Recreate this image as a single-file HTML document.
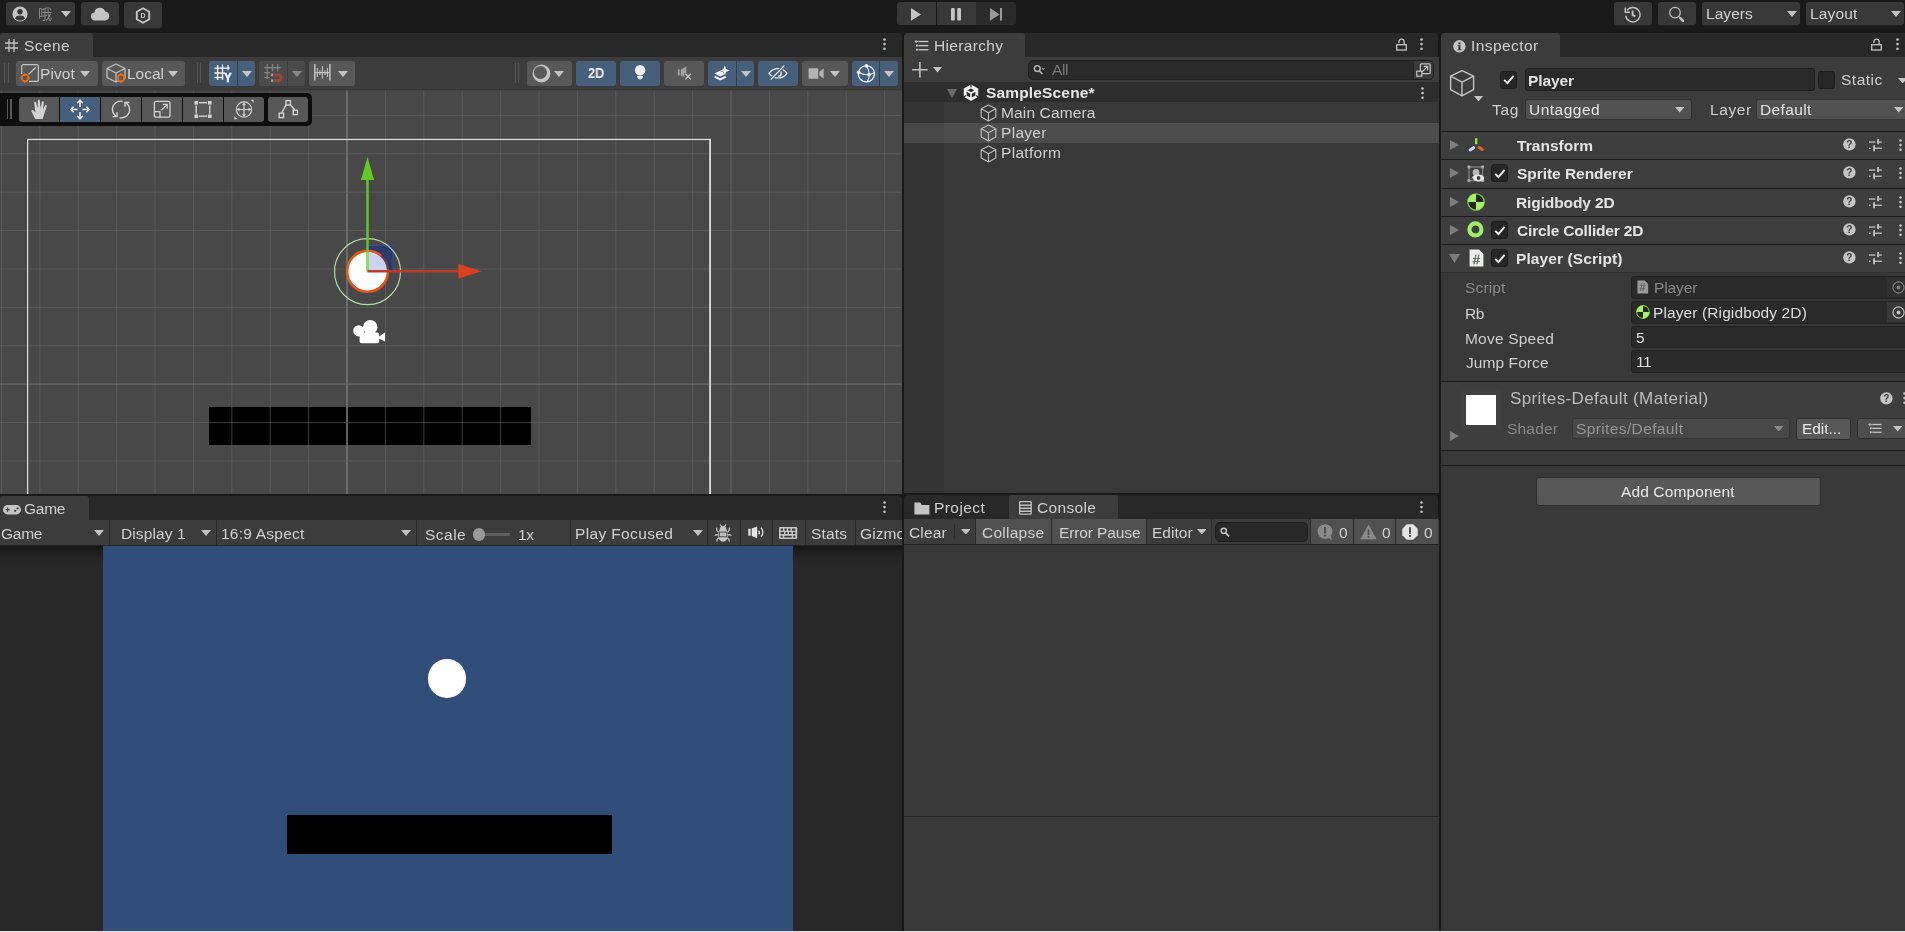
<!DOCTYPE html>
<html><head><meta charset="utf-8"><title>Unity Editor</title>
<style>
html,body{margin:0;padding:0}
body{width:1905px;height:932px;overflow:hidden;background:#191919;position:relative;font-family:"Liberation Sans","Noto Sans CJK SC",sans-serif;font-size:15.5px;color:#d0d0d0}
body div,body span,body svg{position:absolute;box-sizing:border-box}
.t{white-space:nowrap;will-change:transform}
svg.tx{will-change:transform}
.btn{background:#585858;border-radius:3px}
.on{background:#46607c}
.dim{background:#4b4b4b}
</style></head><body>
<div style="left:6px;top:2px;width:69px;height:23px;background:#383838;border-radius:3px;box-shadow:0 1px 0 #222;"></div>
<svg style="left:12px;top:6.4px;" width="16" height="16" viewBox="0 0 16 16"><circle cx="8" cy="8" r="7.6" fill="#c4c4c4"/><circle cx="8" cy="5.8" r="2.7" fill="#383838"/><path d="M3.2 12.4C3.6 10 5.6 9.4 8 9.4s4.4 .6 4.8 3C11.6 13.8 9.9 14.6 8 14.6S4.4 13.8 3.2 12.4Z" fill="#383838"/></svg>
<span class="t" style="left:38px;top:5px;font-size:14px;line-height:18px;color:#8c8c8c">哦</span>
<svg style="left:61.0px;top:10.8px;" width="10" height="6" viewBox="0 0 10 6"><path d="M0 0H10L5.0 6Z" fill="#c4c4c4"/></svg>
<div style="left:81px;top:2px;width:38px;height:23px;background:#383838;border-radius:3px;box-shadow:0 1px 0 #222;"></div>
<svg style="left:90px;top:7px;" width="20" height="14" viewBox="0 0 20 14"><path d="M5 13.5a4 4 0 0 1-.6-7.95A5.6 5.6 0 0 1 15.2 4.4 4.6 4.6 0 0 1 15.4 13.5Z" fill="#c4c4c4"/></svg>
<div style="left:124px;top:2px;width:38px;height:26px;background:#383838;border-radius:3px;box-shadow:0 1px 0 #222;"></div>
<svg class="tx" style="left:135px;top:6.5px;" width="16" height="17" viewBox="0 0 16 17"><path d="M8 1.2L14.2 4.8V12.2L8 15.8L1.8 12.2V4.8Z" fill="none" stroke="#c4c4c4" stroke-width="1.9" stroke-linejoin="round"/><text x="8" y="11" font-size="7" font-weight="bold" text-anchor="middle" fill="#c4c4c4" font-family="Liberation Sans, sans-serif">D</text></svg>
<div style="left:897px;top:2px;width:39px;height:23px;background:#383838;border-radius:3px 0 0 3px;"></div>
<div style="left:937px;top:2px;width:39px;height:23px;background:#383838;"></div>
<div style="left:976px;top:2px;width:39.5px;height:23px;background:#2a2a2a;border-radius:0 3px 3px 0;"></div>
<svg style="left:911px;top:8px;" width="10" height="13" viewBox="0 0 10 13"><path d="M0 0L10 6.4L0 12.8Z" fill="#c4c4c4"/></svg>
<svg style="left:951px;top:8px;" width="10" height="13" viewBox="0 0 10 13"><rect x="0" y="0" width="3.8" height="12.6" rx="1" fill="#c4c4c4"/><rect x="6.2" y="0" width="3.8" height="12.6" rx="1" fill="#c4c4c4"/></svg>
<svg style="left:990px;top:8px;" width="12" height="13" viewBox="0 0 12 13"><path d="M0 0L9.6 6.4L0 12.8Z" fill="#9a9a9a"/><rect x="10" y="0" width="2" height="12.6" fill="#9a9a9a"/></svg>
<div style="left:1614px;top:2px;width:38px;height:23px;background:#383838;border-radius:3px;box-shadow:0 1px 0 #222;"></div>
<svg style="left:1624px;top:6px;" width="18" height="17" viewBox="0 0 18 17"><path d="M3.1 4.4A7.2 7.2 0 1 1 1.7 9.6" fill="none" stroke="#c4c4c4" stroke-width="1.4"/><path d="M1.3 1.6V6.2H5.9" fill="none" stroke="#c4c4c4" stroke-width="1.4"/><path d="M8.6 4.6V9.2L11.4 10.4" fill="none" stroke="#c4c4c4" stroke-width="1.9"/></svg>
<div style="left:1658px;top:2px;width:38px;height:23px;background:#383838;border-radius:3px;box-shadow:0 1px 0 #222;"></div>
<svg style="left:1668px;top:6px;" width="18" height="17" viewBox="0 0 18 17"><circle cx="7" cy="6.6" r="5.3" fill="none" stroke="#c4c4c4" stroke-width="1.2"/><path d="M10.9 10.6L12.9 12.8" stroke="#c4c4c4" stroke-width="1.2"/><path d="M12.4 12.2L15 14.9" stroke="#c4c4c4" stroke-width="2.4" stroke-linecap="round"/></svg>
<div style="left:1702px;top:2px;width:98px;height:23px;background:#383838;border-radius:3px;box-shadow:0 1px 0 #222;"></div>
<span class="t" style="left:1706.00px;top:5.00px;line-height:17px;font-size:15.5px;letter-spacing:0.05px;">Layers</span>
<svg style="left:1786.5px;top:11.2px;" width="10" height="6" viewBox="0 0 10 6"><path d="M0 0H10L5.0 6Z" fill="#c4c4c4"/></svg>
<div style="left:1806px;top:2px;width:98px;height:23px;background:#383838;border-radius:3px;box-shadow:0 1px 0 #222;"></div>
<span class="t" style="left:1810.00px;top:5.00px;line-height:17px;font-size:15.5px;letter-spacing:0.14px;">Layout</span>
<svg style="left:1890.5px;top:11.2px;" width="10" height="6" viewBox="0 0 10 6"><path d="M0 0H10L5.0 6Z" fill="#c4c4c4"/></svg>
<div style="left:0px;top:33px;width:902px;height:24px;background:#282828;border-radius:0 4px 0 0;"></div>
<div style="left:0px;top:33px;width:93px;height:24px;background:#3c3c3c;border-radius:3px 3px 0 0;"></div>
<svg style="left:5px;top:39px;" width="13" height="13" viewBox="0 0 13 13"><path d="M4 0V13M9 0V13M0 4H13M0 9H13" stroke="#c4c4c4" stroke-width="1.3" fill="none"/></svg>
<span class="t" style="left:24.00px;top:37.00px;line-height:17px;font-size:15.5px;letter-spacing:0.41px;">Scene</span>
<svg style="left:883.2px;top:38px;" width="3" height="13" viewBox="0 0 3 13"><circle cx="1.5" cy="1.5" r="1.3" fill="#c4c4c4"/><circle cx="1.5" cy="6.1" r="1.3" fill="#c4c4c4"/><circle cx="1.5" cy="10.7" r="1.3" fill="#c4c4c4"/></svg>
<div style="left:0px;top:57px;width:902px;height:32px;background:#3c3c3c;"></div>
<svg style="left:0;top:89px" width="902" height="405" viewBox="0 0 902 405">
<defs><linearGradient id="sh" x1="0" y1="0" x2="0" y2="1"><stop offset="0" stop-color="#2e2e2e"/><stop offset="1" stop-color="#484848" stop-opacity="0"/></linearGradient></defs>
<rect width="902" height="405" fill="#484848"/>
<rect x="209" y="318" width="322" height="38" fill="#000"/>
<rect x="0.90" y="0" width="1" height="405" fill="#676767" fill-opacity="0.58"/><rect x="39.30" y="0" width="1" height="405" fill="#676767" fill-opacity="0.58"/><rect x="77.70" y="0" width="1" height="405" fill="#676767" fill-opacity="0.58"/><rect x="116.10" y="0" width="1" height="405" fill="#676767" fill-opacity="0.58"/><rect x="154.50" y="0" width="1" height="405" fill="#676767" fill-opacity="0.58"/><rect x="192.90" y="0" width="1" height="405" fill="#676767" fill-opacity="0.58"/><rect x="231.30" y="0" width="1" height="405" fill="#676767" fill-opacity="0.58"/><rect x="269.70" y="0" width="1" height="405" fill="#676767" fill-opacity="0.58"/><rect x="308.10" y="0" width="1" height="405" fill="#676767" fill-opacity="0.58"/><rect x="346.00" y="0" width="2" height="405" fill="#727272" fill-opacity="0.83"/><rect x="384.90" y="0" width="1" height="405" fill="#676767" fill-opacity="0.58"/><rect x="423.30" y="0" width="1" height="405" fill="#676767" fill-opacity="0.58"/><rect x="461.70" y="0" width="1" height="405" fill="#676767" fill-opacity="0.58"/><rect x="500.10" y="0" width="1" height="405" fill="#676767" fill-opacity="0.58"/><rect x="538.50" y="0" width="1" height="405" fill="#676767" fill-opacity="0.58"/><rect x="576.90" y="0" width="1" height="405" fill="#676767" fill-opacity="0.58"/><rect x="615.30" y="0" width="1" height="405" fill="#676767" fill-opacity="0.58"/><rect x="653.70" y="0" width="1" height="405" fill="#676767" fill-opacity="0.58"/><rect x="692.10" y="0" width="1" height="405" fill="#676767" fill-opacity="0.58"/><rect x="730.00" y="0" width="2" height="405" fill="#676767" fill-opacity="0.45"/><rect x="768.90" y="0" width="1" height="405" fill="#676767" fill-opacity="0.58"/><rect x="807.30" y="0" width="1" height="405" fill="#676767" fill-opacity="0.58"/><rect x="845.70" y="0" width="1" height="405" fill="#676767" fill-opacity="0.58"/><rect x="884.10" y="0" width="1" height="405" fill="#676767" fill-opacity="0.58"/><rect x="0" y="25.90" width="902" height="1" fill="#676767" fill-opacity="0.58"/><rect x="0" y="64.30" width="902" height="1" fill="#676767" fill-opacity="0.58"/><rect x="0" y="102.70" width="902" height="1" fill="#676767" fill-opacity="0.58"/><rect x="0" y="141.10" width="902" height="1" fill="#676767" fill-opacity="0.58"/><rect x="0" y="179.50" width="902" height="1" fill="#676767" fill-opacity="0.58"/><rect x="0" y="217.90" width="902" height="1" fill="#676767" fill-opacity="0.58"/><rect x="0" y="256.30" width="902" height="1" fill="#676767" fill-opacity="0.58"/><rect x="0" y="294.35" width="902" height="1.7" fill="#727272" fill-opacity="0.6"/><rect x="0" y="333.10" width="902" height="1" fill="#676767" fill-opacity="0.58"/><rect x="0" y="371.50" width="902" height="1" fill="#676767" fill-opacity="0.58"/>
<rect x="27" y="50" width="1.2" height="360" fill="#dcdcdc"/>
<rect x="27" y="49.8" width="684" height="1.3" fill="#dadada"/>
<rect x="709.2" y="50" width="1.8" height="360" fill="#dcdcdc"/>

<rect x="367.5" y="156.5" width="25.6" height="25.6" fill="#2c3a6e" stroke="#3b4c9c" stroke-width="1"/>
<circle cx="367.5" cy="182.70000000000002" r="33" fill="none" stroke="#b6dca6" stroke-width="1.2"/>
<circle cx="367.5" cy="182.3" r="20.4" fill="#fff" stroke="#e2571b" stroke-width="2.6"/>
<path d="M367.5 182.3V163.10000000000002A19.2 19.2 0 0 1 386.7 182.3Z" fill="#cbd4f1"/>
<path d="M381.5 166.3A21 21 0 0 1 388.1 180.3" fill="none" stroke="#2c3a6e" stroke-width="2.4" stroke-opacity="0.75"/>
<path d="M367.5 182.3V90.5" stroke="#63c628" stroke-width="2.5"/>
<path d="M367.5 182.3V163.3" stroke="#8fdd68" stroke-width="2.5"/>
<path d="M367.5 68L374.1 91H360.9Z" fill="#60c924"/>
<path d="M367.5 182.3H458.6" stroke="#bd3b2b" stroke-width="2.5"/>
<path d="M481.5 182.3L458.4 174.9V189.70000000000002Z" fill="#db421d"/>
<g fill="#fff" transform="translate(0,-89)">
<circle cx="358.8" cy="330.8" r="5.6"/><circle cx="370.2" cy="327.2" r="7.2"/>
<rect x="359.6" y="332.4" width="19.6" height="10.8" rx="2"/>
<path d="M378.6 336.8L385 332.6V341.6L378.6 338.6Z"/></g>
<rect width="902" height="3" fill="url(#sh)"/>
</svg>
<div style="left:4.2px;top:63px;width:1.3px;height:20px;background:#555;"></div><div style="left:7.5px;top:63px;width:1.3px;height:20px;background:#555;"></div>
<div class="btn" style="left:16px;top:61px;width:82px;height:25px;border-radius:3px"></div>
<svg style="left:19px;top:62px;" width="24" height="24" viewBox="0 0 24 24"><path d="M2.7 12V4.6a2 2 0 0 1 2-2H17.4a2 2 0 0 1 2 2V17.4a2 2 0 0 1 -2 2H10" fill="none" stroke="#c4c4c4" stroke-width="1.2"/><path d="M9.6 12.4L16.8 5.2" stroke="#c4c4c4" stroke-width="1.3"/><g transform="translate(6.1,16)"><circle r="3.3" fill="none" stroke="#e8701a" stroke-width="1.7"/><g fill="#e8701a"><rect x="-1.1" y="-4.6" width="2.2" height="2"/><rect x="-1.1" y="2.6" width="2.2" height="2"/><rect x="-4.6" y="-1.1" width="2" height="2.2"/><rect x="2.6" y="-1.1" width="2" height="2.2"/></g><rect x="-1.9" y="-1.9" width="3.8" height="3.8" fill="#585858"/></g></svg>
<span class="t" style="left:40.00px;top:65.00px;line-height:17px;font-size:15.5px;letter-spacing:0.08px;">Pivot</span>
<svg style="left:80.3px;top:71.0px;" width="10" height="6" viewBox="0 0 10 6"><path d="M0 0H10L5.0 6Z" fill="#c4c4c4"/></svg>
<div class="btn" style="left:102px;top:61px;width:83px;height:25px;border-radius:3px"></div>
<svg style="left:104px;top:62px;" width="24" height="24" viewBox="0 0 24 24"><path d="M12 2L21 6.5V15.5L12 20L3 15.5V6.5ZM3 6.5L12 11L21 6.5M12 11V20" fill="none" stroke="#c4c4c4" stroke-width="1.2" stroke-linejoin="round"/><g transform="translate(17.1,16)"><circle r="3.3" fill="none" stroke="#e8701a" stroke-width="1.7"/><g fill="#e8701a"><rect x="-1.1" y="-4.6" width="2.2" height="2"/><rect x="-1.1" y="2.6" width="2.2" height="2"/><rect x="-4.6" y="-1.1" width="2" height="2.2"/><rect x="2.6" y="-1.1" width="2" height="2.2"/></g><rect x="-1.9" y="-1.9" width="3.8" height="3.8" fill="#585858"/></g></svg>
<span class="t" style="left:127.00px;top:65.00px;line-height:17px;font-size:15.5px;letter-spacing:-0.01px;">Local</span>
<svg style="left:167.6px;top:71.0px;" width="10" height="6" viewBox="0 0 10 6"><path d="M0 0H10L5.0 6Z" fill="#c4c4c4"/></svg>
<div style="left:196.8px;top:63px;width:1.3px;height:20px;background:#555;"></div><div style="left:200.10000000000002px;top:63px;width:1.3px;height:20px;background:#555;"></div>
<div class="btn on" style="left:209px;top:61px;width:28px;height:25px;border-radius:3px 0 0 3px"></div>
<div class="btn on" style="left:238px;top:61px;width:17px;height:25px;border-radius:0 3px 3px 0"></div>
<svg class="tx" style="left:213px;top:63px;" width="20" height="21" viewBox="0 0 20 21"><path d="M4.6 2V17M9.5 1.4V17M15 2V7.2M1.4 5.2H16.8M1.4 10H11.5M1.4 14.5H10.5" stroke="#f4f4f4" stroke-width="1.3" fill="none"/><text transform="translate(14.9,19) scale(0.8,1)" font-size="13.6" font-weight="bold" text-anchor="middle" fill="#f4f4f4" stroke="#f4f4f4" stroke-width="0.7" font-family="Liberation Sans, sans-serif">Y</text></svg>
<svg style="left:241.5px;top:71.0px;" width="10" height="6" viewBox="0 0 10 6"><path d="M0 0H10L5.0 6Z" fill="#c4c4c4"/></svg>
<div class="btn dim" style="left:259px;top:61px;width:28px;height:25px;border-radius:3px 0 0 3px"></div>
<div class="btn dim" style="left:288px;top:61px;width:17px;height:25px;border-radius:0 3px 3px 0"></div>
<svg style="left:262px;top:63px;" width="22" height="21" viewBox="0 0 22 21"><path d="M5.2 1V16.5M10.4 1V8.4M15.7 1V8.4M2.2 4.6H18.7M2.2 9.6H8M2.2 14.5H8" stroke="#858585" stroke-width="1.1" fill="none"/><path d="M12.4 12H16.4a2.75 2.75 0 0 1 0 5.5H12.4" fill="none" stroke="#a04538" stroke-width="2.8"/><rect x="8.9" y="10.6" width="2.4" height="2.6" fill="#a0a0a0"/><rect x="8.9" y="16.3" width="2.4" height="2.6" fill="#a0a0a0"/></svg>
<svg style="left:291.5px;top:71.0px;" width="10" height="6" viewBox="0 0 10 6"><path d="M0 0H10L5.0 6Z" fill="#8a8a8a"/></svg>
<div class="btn" style="left:309px;top:61px;width:46px;height:25px;border-radius:3px"></div>
<svg style="left:313px;top:63px;" width="20" height="21" viewBox="0 0 20 21"><path d="M1.8 1V17.4M16.9 1V17.4" stroke="#c4c4c4" stroke-width="1.5"/><path d="M1.8 9.6H16.9M4.3 5V14M6.9 7.2V12M9.4 3V15.6M12 7.2V12M14.5 5V14" stroke="#c4c4c4" stroke-width="1.1"/></svg>
<svg style="left:337.5px;top:71.0px;" width="10" height="6" viewBox="0 0 10 6"><path d="M0 0H10L5.0 6Z" fill="#c4c4c4"/></svg>
<div style="left:514.8px;top:63px;width:1.3px;height:20px;background:#555;"></div><div style="left:518.0999999999999px;top:63px;width:1.3px;height:20px;background:#555;"></div>
<div class="btn" style="left:527px;top:61px;width:45px;height:25px;border-radius:3px"></div>
<svg style="left:531.6px;top:64px;" width="19" height="19" viewBox="0 0 19 19"><circle cx="9.5" cy="9.5" r="8.9" fill="#c4c4c4"/><circle cx="8.4" cy="8.4" r="6.5" fill="#585858"/></svg>
<svg style="left:554.3px;top:71.0px;" width="10" height="6" viewBox="0 0 10 6"><path d="M0 0H10L5.0 6Z" fill="#c4c4c4"/></svg>
<div class="btn on" style="left:576px;top:61px;width:40px;height:25px;border-radius:3px"></div>
<span class="t" style="left:588.00px;top:64.00px;line-height:17px;font-size:15px;letter-spacing:0.00px;color:#f0f0f0;font-weight:bold;transform:scaleX(0.85);transform-origin:0 0;">2D</span>
<div class="btn on" style="left:620px;top:61px;width:40px;height:25px;border-radius:3px"></div>
<svg style="left:632px;top:64px;" width="16" height="19" viewBox="0 0 16 19"><circle cx="8.1" cy="6.3" r="5.2" fill="#f0f0f0"/><path d="M5.2 12.1H11A2.9 3.4 0 0 1 5.2 12.1Z" fill="#f0f0f0"/></svg>
<div class="btn" style="left:664px;top:61px;width:40px;height:25px;border-radius:3px"></div>
<svg style="left:676px;top:65px;" width="17" height="17" viewBox="0 0 17 17"><rect x="1.8" y="4.4" width="2" height="6" fill="#a0a0a0"/><path d="M4.8 4.4L10.4 1.6V13L4.8 10.4Z" fill="#a0a0a0"/><path d="M8.4 8V13.6L10.6 14.6V8Z" fill="#585858"/><path d="M9.4 8.8L14.8 14.4M14.8 8.8L9.4 14.4" stroke="#cacaca" stroke-width="1.3"/></svg>
<div class="btn on" style="left:708px;top:61px;width:28px;height:25px;border-radius:3px 0 0 3px"></div>
<div class="btn on" style="left:737px;top:61px;width:17px;height:25px;border-radius:0 3px 3px 0"></div>
<svg style="left:712px;top:64px;" width="20" height="20" viewBox="0 0 20 20"><path d="M2.4 9.5L8.2 6.6L14 9.5L8.2 12.4Z" fill="#f0f0f0"/><path d="M2.6 12.6L8.2 15.4L13.8 12.6" fill="none" stroke="#f0f0f0" stroke-width="1.8"/><path d="M12.9 .2L14.5 4.8L19.1 6.4L14.5 8L12.9 12.6L11.3 8L6.7 6.4L11.3 4.8Z" fill="#46607c"/><path d="M12.9 1.4L14.2 5.1L17.9 6.4L14.2 7.7L12.9 11.4L11.6 7.7L7.9 6.4L11.6 5.1Z" fill="#f0f0f0"/></svg>
<svg style="left:740.5px;top:71.0px;" width="10" height="6" viewBox="0 0 10 6"><path d="M0 0H10L5.0 6Z" fill="#c4c4c4"/></svg>
<div class="btn on" style="left:758px;top:61px;width:40px;height:25px;border-radius:3px"></div>
<svg style="left:768px;top:64px;" width="20" height="19" viewBox="0 0 20 19"><path d="M1 9.3C4 5.4 7.2 4.6 10 4.6C12.8 4.6 16 5.4 19 9.3C16 13.2 12.8 14 10 14C7.2 14 4 13.2 1 9.3Z" fill="none" stroke="#f0f0f0" stroke-width="1.2"/><path d="M10.6 6.4a2.9 2.9 0 0 1 -.6 5.8" fill="none" stroke="#f0f0f0" stroke-width="1.2"/><path d="M2.8 15.6L16.2 1.6" stroke="#46607c" stroke-width="3"/><path d="M2.8 15.6L16.2 1.6" stroke="#f0f0f0" stroke-width="1.3"/></svg>
<div class="btn" style="left:802px;top:61px;width:46px;height:25px;border-radius:3px"></div>
<svg style="left:808px;top:67px;" width="17" height="14" viewBox="0 0 17 14"><rect x="0.6" y="1.2" width="9.6" height="10.6" rx="0.6" fill="#b4b4b4"/><path d="M11.4 4.8L15.6 1.6V11.6L11.4 8.4Z" fill="#b4b4b4"/></svg>
<svg style="left:830.0px;top:71.0px;" width="10" height="6" viewBox="0 0 10 6"><path d="M0 0H10L5.0 6Z" fill="#c4c4c4"/></svg>
<div class="btn on" style="left:852px;top:61px;width:27px;height:25px;border-radius:3px 0 0 3px"></div>
<div class="btn on" style="left:880px;top:61px;width:18px;height:25px;border-radius:0 3px 3px 0"></div>
<svg style="left:856px;top:64px;" width="20" height="20" viewBox="0 0 20 20"><circle cx="10.4" cy="9.8" r="8.1" fill="none" stroke="#f0f0f0" stroke-width="1.3"/><path d="M10.4 1.7Q15.4 9.6 11.4 17.8M2.6 8.2Q10 13 18.4 8.8" fill="none" stroke="#f0f0f0" stroke-width="1.1"/><circle cx="10.4" cy="1.9" r="1.8" fill="#f0f0f0"/><circle cx="2.6" cy="8.2" r="1.8" fill="#f0f0f0"/><circle cx="13.2" cy="10.6" r="1.8" fill="#f0f0f0"/></svg>
<svg style="left:884.0px;top:71.0px;" width="10" height="6" viewBox="0 0 10 6"><path d="M0 0H10L5.0 6Z" fill="#c4c4c4"/></svg>
<div style="left:0px;top:93px;width:312px;height:33px;background:#0e0e0e;border-radius:0 5px 5px 0;"></div>
<div style="left:6.6px;top:99px;width:1.4px;height:20px;background:#5a5a5a;"></div><div style="left:10.2px;top:99px;width:1.4px;height:20px;background:#5a5a5a;"></div>
<div class="btn" style="left:19px;top:97px;width:40px;height:25px;border-radius:3px 0 0 3px"></div>
<div class="btn on" style="left:60px;top:97px;width:40px;height:25px;border-radius:0"></div>
<div class="btn" style="left:101px;top:97px;width:40px;height:25px;border-radius:0"></div>
<div class="btn" style="left:142px;top:97px;width:40px;height:25px;border-radius:0"></div>
<div class="btn" style="left:183px;top:97px;width:40px;height:25px;border-radius:0"></div>
<div class="btn" style="left:224px;top:97px;width:40px;height:25px;border-radius:0 3px 3px 0"></div>
<div class="btn" style="left:268px;top:97px;width:40px;height:25px;border-radius:3px"></div>
<svg style="left:29.0px;top:99.0px;" width="20" height="21" viewBox="0 0 20 21"><path d="M6.2 20L2.6 12.8C1.8 11.2 3.4 10.2 4.6 11.6L6.4 13.8L5.2 4.2C5 2.6 6.8 2.4 7.2 3.8L8.6 9.6L8.8 2C8.8 .4 10.8 .4 10.9 2L11.4 9.6L12.8 3C13.2 1.6 15 2 14.8 3.6L13.9 10.6L16 6.6C16.8 5.4 18.2 6.2 17.7 7.6L15.4 14.4L13.6 20Z" fill="#d2d2d2"/></svg>
<svg style="left:70.0px;top:99.0px;" width="20" height="21" viewBox="0 0 20 21"><g stroke="#f0f0f0" stroke-width="1.5" fill="none"><path d="M10 1.2V8M10 13V19.8M.8 10.5H7.5M12.5 10.5H19.2"/><path d="M7.2 4L10 1.2L12.8 4M7.2 17L10 19.8L12.8 17M3.6 7.7L.8 10.5L3.6 13.3M16.4 7.7L19.2 10.5L16.4 13.3"/></g></svg>
<svg style="left:111.0px;top:99.0px;" width="20" height="21" viewBox="0 0 20 21"><g stroke="#d2d2d2" stroke-width="1.4" fill="none"><path d="M11.6 2.4A8.2 8.2 0 0 0 5.4 17.4"/><path d="M1.6 17.6H6V13.2"/><path d="M8.4 18.6A8.2 8.2 0 0 0 14.6 3.6"/><path d="M18.4 3.4H14V7.8"/></g></svg>
<svg style="left:152.0px;top:99.0px;" width="20" height="21" viewBox="0 0 20 21"><g stroke="#d2d2d2" stroke-width="1.3" fill="none"><rect x="2.4" y="2.4" width="15.6" height="15.8" rx="1.6"/><path d="M2.4 12.6H8V18.2"/><path d="M9.4 11.2L15 5.6M10.8 5.4H15.2V9.8"/></g></svg>
<svg style="left:193.0px;top:99.0px;" width="20" height="21" viewBox="0 0 20 21"><g fill="#d2d2d2"><rect x="1.4" y="2" width="3.6" height="3.6"/><rect x="15" y="2" width="3.6" height="3.6"/><rect x="1.4" y="15.4" width="3.6" height="3.6"/><rect x="15" y="15.4" width="3.6" height="3.6"/><rect x="5.8" y="3" width="8.4" height="1.4"/><rect x="5.8" y="16.5" width="8.4" height="1.4"/><rect x="2.5" y="6.4" width="1.4" height="8.2"/><rect x="16.1" y="6.4" width="1.4" height="8.2"/></g></svg>
<svg style="left:234.0px;top:99.0px;" width="20" height="21" viewBox="0 0 20 21"><g stroke="#d2d2d2" stroke-width="1.2" fill="none"><circle cx="10" cy="10.5" r="7.6"/><path d="M10 4.6V16.4M4.1 10.5H15.9"/></g><g fill="#d2d2d2"><path d="M10 3.4L12 6H8ZM10 17.6L12 15H8ZM2.9 10.5L5.5 8.5V12.5ZM17.1 10.5L14.5 8.5V12.5Z"/><path d="M16.6 .8H19.6V3.8ZM.4 17.2V20.2H3.4Z"/></g></svg>
<svg style="left:278.0px;top:99.0px;" width="20" height="21" viewBox="0 0 20 21"><g stroke="#d2d2d2" stroke-width="1.4" fill="none"><rect x="8" y="1.6" width="4.4" height="4.4"/><rect x="1.2" y="14.2" width="4.4" height="4.4"/><rect x="15.2" y="11.2" width="4.4" height="4.4"/><path d="M3.6 14L8.2 5.6M12.2 5.6L16.8 11"/></g></svg>
<div style="left:0px;top:496px;width:902px;height:24px;background:#282828;border-radius:0 4px 0 0;"></div>
<div style="left:0px;top:496px;width:89px;height:24px;background:#3c3c3c;border-radius:3px 3px 0 0;"></div>
<svg style="left:3px;top:505px;" width="18" height="10" viewBox="0 0 18 10"><rect x="0" y="0" width="18" height="9.4" rx="4.7" fill="#c4c4c4"/><path d="M4.6 2.6V6.8M2.5 4.7H6.7" stroke="#3c3c3c" stroke-width="1.2"/><circle cx="12.2" cy="5.8" r="1.1" fill="#3c3c3c"/><circle cx="14.6" cy="3.4" r="1.1" fill="#3c3c3c"/></svg>
<span class="t" style="left:24.00px;top:500.00px;line-height:17px;font-size:15.5px;letter-spacing:-0.26px;">Game</span>
<svg style="left:883.2px;top:501px;" width="3" height="13" viewBox="0 0 3 13"><circle cx="1.5" cy="1.5" r="1.3" fill="#c4c4c4"/><circle cx="1.5" cy="6.1" r="1.3" fill="#c4c4c4"/><circle cx="1.5" cy="10.7" r="1.3" fill="#c4c4c4"/></svg>
<div style="left:0px;top:520px;width:902px;height:26px;background:#3c3c3c;border-bottom:1px solid #232323;"></div>
<div style="left:109px;top:520px;width:1px;height:25px;background:#2a2a2a;"></div>
<div style="left:216px;top:520px;width:1px;height:25px;background:#2a2a2a;"></div>
<div style="left:416px;top:520px;width:1px;height:25px;background:#2a2a2a;"></div>
<div style="left:570px;top:520px;width:1px;height:25px;background:#2a2a2a;"></div>
<div style="left:707px;top:520px;width:1px;height:25px;background:#2a2a2a;"></div>
<div style="left:740px;top:520px;width:1px;height:25px;background:#2a2a2a;"></div>
<div style="left:772px;top:520px;width:1px;height:25px;background:#2a2a2a;"></div>
<div style="left:805px;top:520px;width:1px;height:25px;background:#2a2a2a;"></div>
<div style="left:855px;top:520px;width:1px;height:25px;background:#2a2a2a;"></div>
<span class="t" style="left:1.00px;top:525.00px;line-height:17px;font-size:15.5px;letter-spacing:-0.26px;">Game</span>
<svg style="left:93.5px;top:530.0px;" width="10" height="6" viewBox="0 0 10 6"><path d="M0 0H10L5.0 6Z" fill="#c4c4c4"/></svg>
<span class="t" style="left:121.00px;top:525.00px;line-height:17px;font-size:15.5px;letter-spacing:0.10px;">Display 1</span>
<svg style="left:200.5px;top:530.0px;" width="10" height="6" viewBox="0 0 10 6"><path d="M0 0H10L5.0 6Z" fill="#c4c4c4"/></svg>
<span class="t" style="left:221.00px;top:525.00px;line-height:17px;font-size:15.5px;letter-spacing:0.23px;">16:9 Aspect</span>
<svg style="left:400.5px;top:530.0px;" width="10" height="6" viewBox="0 0 10 6"><path d="M0 0H10L5.0 6Z" fill="#c4c4c4"/></svg>
<span class="t" style="left:425.00px;top:526.00px;line-height:17px;font-size:15.5px;letter-spacing:0.49px;">Scale</span>
<div style="left:479px;top:533.3px;width:31px;height:2.4px;background:#5e5e5e;border-radius:1px;"></div>
<div style="left:473px;top:528.4px;width:12.4px;height:12.4px;background:#999;border-radius:50%;"></div>
<span class="t" style="left:518.00px;top:526.00px;line-height:17px;font-size:15.5px;letter-spacing:-0.45px;">1x</span>
<span class="t" style="left:575.00px;top:525.00px;line-height:17px;font-size:15.5px;letter-spacing:0.36px;">Play Focused</span>
<svg style="left:692.6px;top:530.0px;" width="10" height="6" viewBox="0 0 10 6"><path d="M0 0H10L5.0 6Z" fill="#c4c4c4"/></svg>
<svg style="left:714px;top:523px;" width="19" height="20" viewBox="0 0 19 20"><g fill="#c6c6c6"><ellipse cx="9.05" cy="11.9" rx="5" ry="6.9"/><path d="M5.6 6.4A3.5 4.2 0 0 1 12.5 6.4Z"/></g><g stroke="#c6c6c6" stroke-width="1.2" fill="none"><path d="M7.9 3.8L6.1 1.5M10.2 3.8L12 1.5M4.6 9.2L3 7.6L2.6 4.6M13.5 9.2L15.1 7.6L15.5 4.6M4.3 11.9H1.7L.9 12.9M13.8 11.9H16.4L17.2 12.9M4.7 15L3.2 16.3L2.8 18.5M13.4 15L14.9 16.3L15.3 18.5"/></g><rect x="5.3" y="9.1" width="7.5" height="4.7" fill="#bdbdbd" stroke="#3c3c3c" stroke-width="0.9"/></svg>
<svg style="left:747px;top:524px;" width="18" height="17" viewBox="0 0 18 17"><g fill="#e4e4e4"><rect x="1.3" y="4.7" width="2.3" height="7"/><path d="M4.7 4.6L10.2 2.4V14.2L4.7 12Z"/></g><g stroke="#e4e4e4" stroke-width="1.3" fill="none"><path d="M11.6 6.6A2.6 2.6 0 0 1 11.6 10.2"/><path d="M14 3.8A6.4 6.4 0 0 1 14 12.8"/></g></svg>
<svg style="left:779px;top:527px;" width="19" height="13" viewBox="0 0 19 13"><rect x="0" y="0" width="18.2" height="12" rx="1.2" fill="#c6c6c6"/><g fill="#3c3c3c"><rect x="1.6" y="1.5" width="2.4" height="2.2" rx="0.6"/><rect x="5.4" y="1.5" width="2.4" height="2.2" rx="0.6"/><rect x="9.2" y="1.5" width="2.4" height="2.2" rx="0.6"/><rect x="13" y="1.5" width="3.4" height="2.2" rx="0.6"/><rect x="1.6" y="5.1" width="3.4" height="2" rx="0.6"/><rect x="6.4" y="5.1" width="2.2" height="2" rx="0.6"/><rect x="10" y="5.1" width="2.4" height="2" rx="0.6"/><rect x="13.9" y="5.1" width="2.5" height="2" rx="0.6"/><rect x="1.6" y="8.6" width="2.2" height="2.1" rx="0.6"/><rect x="5.2" y="8.7" width="7.6" height="1.9" rx="0.6"/><rect x="14.2" y="8.6" width="2.2" height="2.1" rx="0.6"/></g></svg>
<span class="t" style="left:811.00px;top:525.00px;line-height:17px;font-size:15.5px;letter-spacing:0.17px;">Stats</span>
<div style="left:856px;top:520px;width:46px;height:25px;background:transparent;overflow:hidden;"><span class="t" style="left:4.00px;top:5.00px;line-height:17px;font-size:15.5px;letter-spacing:0.10px;">Gizmos</span></div>
<div style="left:0px;top:546px;width:902px;height:385px;background:#282828;background:linear-gradient(#131313,#1b1b1b 3px,#212121 8px,#252525 13px,#282828 20px);"></div>
<div style="left:103px;top:546px;width:690px;height:385px;background:#314d79;"></div>
<div style="left:427.8px;top:658.9px;width:38.6px;height:38.8px;background:#fff;border-radius:50%;"></div>
<div style="left:287px;top:815px;width:325px;height:39px;background:#000;"></div>
<div style="left:904px;top:33px;width:534px;height:24px;background:#282828;border-radius:4px 4px 0 0;"></div>
<div style="left:904px;top:33px;width:121px;height:24px;background:#3c3c3c;border-radius:4px 3px 0 0;"></div>
<svg style="left:914px;top:40px;" width="15" height="11" viewBox="0 0 15 11"><g fill="#c4c4c4"><rect x="4.4" y="0.8" width="10" height="1.4"/><rect x="4.4" y="4.9" width="10" height="1.4"/><rect x="4.4" y="9" width="10" height="1.4"/><rect x="2" y="4.6" width="1.9" height="1.9"/><rect x="2" y="8.7" width="1.9" height="1.9"/><path d="M0.4 1.5L2.6 -0.2V3.2Z"/><rect x="2.4" y="0.9" width="1.6" height="1.2"/></g></svg>
<span class="t" style="left:934.00px;top:37.00px;line-height:17px;font-size:15.5px;letter-spacing:0.33px;">Hierarchy</span>
<svg style="left:1395.5px;top:38px;" width="11" height="13" viewBox="0 0 11 13"><path d="M2.9 4.9V3.8a2.6 2.6 0 0 1 5.2 0V6.6" fill="none" stroke="#c4c4c4" stroke-width="1.3"/><rect x="0.7" y="6.7" width="9.6" height="5.3" fill="none" stroke="#c4c4c4" stroke-width="1.3"/></svg>
<svg style="left:1420.2px;top:38px;" width="3" height="13" viewBox="0 0 3 13"><circle cx="1.5" cy="1.5" r="1.3" fill="#c4c4c4"/><circle cx="1.5" cy="6.1" r="1.3" fill="#c4c4c4"/><circle cx="1.5" cy="10.7" r="1.3" fill="#c4c4c4"/></svg>
<div style="left:904px;top:57px;width:535px;height:25px;background:#3c3c3c;"></div>
<svg style="left:912px;top:62.4px;" width="16" height="16" viewBox="0 0 16 16"><path d="M7.9 0V15.4M0.2 7.7H15.6" stroke="#c4c4c4" stroke-width="1.6"/></svg>
<svg style="left:933.0px;top:67.0px;" width="9" height="5.6" viewBox="0 0 9 5.6"><path d="M0 0H9L4.5 5.6Z" fill="#c4c4c4"/></svg>
<div style="left:1028px;top:60px;width:406px;height:20px;background:#2a2a2a;border-radius:5px;border:1px solid #1f1f1f;overflow:hidden;"><div style="left:384px;top:-1px;width:22px;height:20px;background:#3a3a3a;border-left:1px solid #262626;"></div></div>
<svg style="left:1033px;top:64px;" width="13" height="12" viewBox="0 0 13 12"><circle cx="4.3" cy="4.6" r="2.9" fill="none" stroke="#b0b0b0" stroke-width="1.5"/><path d="M6.4 6.8L9.4 10" stroke="#b0b0b0" stroke-width="1.7"/><path d="M8.6 4.2H12L10.3 6Z" fill="#b0b0b0"/></svg>
<span class="t" style="left:1052.00px;top:61.00px;line-height:17px;font-size:15.5px;letter-spacing:-0.45px;color:#777;">All</span>
<svg style="left:1416px;top:63px;" width="15" height="14" viewBox="0 0 15 14"><rect x="4.4" y="0.8" width="9.8" height="9.8" rx="1" fill="none" stroke="#c4c4c4" stroke-width="1.2"/><path d="M6.2 8.8L11.4 3.6M7.8 3.4H11.6V7.2" fill="none" stroke="#c4c4c4" stroke-width="1.2"/><rect x="0.8" y="8.2" width="5" height="5" fill="#3a3a3a" stroke="#c4c4c4" stroke-width="1.2"/></svg>
<div style="left:904px;top:82px;width:535px;height:411px;background:#383838;"></div>
<div style="left:904px;top:82px;width:40px;height:411px;background:#353535;"></div>
<div style="left:904px;top:82px;width:535px;height:20px;background:#2d2d2d;"></div>
<div style="left:904px;top:123px;width:535px;height:20px;background:#4d4d4d;"></div>
<div style="left:904px;top:123px;width:40px;height:20px;background:#474747;"></div>
<svg style="left:947px;top:89px;" width="10" height="9" viewBox="0 0 10 9"><path d="M0 0H10L5 9Z" fill="#6a6a6a"/></svg>
<svg style="left:963px;top:84px;" width="16" height="18" viewBox="0 0 16 18"><g fill="#f2f2f2"><path d="M8 .6L15.2 4.6V12.8L8 17L.8 12.8V4.6Z"/></g><g fill="#2d2d2d"><path d="M8 4.4L11.4 6.3L8 8.2L4.6 6.3Z"/><path d="M3.6 7.8L7.2 9.8V13.6L3.6 11.6Z"/><path d="M12.4 7.8L8.8 9.8V13.6L12.4 11.6Z"/><path d="M7.4 .4h1.2v3h-1.2zM.2 12.4l2.6-1.5 .6 1-2.6 1.5zM15.8 12.4l-2.6-1.5-.6 1 2.6 1.5z"/></g></svg>
<span class="t" style="left:986.00px;top:84.00px;line-height:17px;font-size:15.5px;letter-spacing:0.16px;color:#e6e6e6;font-weight:bold;">SampleScene*</span>
<svg style="left:1421.2px;top:87px;" width="3" height="13" viewBox="0 0 3 13"><circle cx="1.5" cy="1.5" r="1.3" fill="#c4c4c4"/><circle cx="1.5" cy="6.1" r="1.3" fill="#c4c4c4"/><circle cx="1.5" cy="10.7" r="1.3" fill="#c4c4c4"/></svg>
<svg style="left:979.8px;top:104.2px;" width="17" height="18" viewBox="0 0 17 18"><path d="M8.5 1L15.8 4.8V13L8.5 17L1.2 13V4.8ZM1.2 4.8L8.5 8.8L15.8 4.8M8.5 8.8V17" fill="none" stroke="#bcbcbc" stroke-width="1.15" stroke-linejoin="round"/></svg>
<span class="t" style="left:1001.00px;top:104.00px;line-height:17px;font-size:15.5px;letter-spacing:0.14px;">Main Camera</span>
<svg style="left:979.8px;top:124.4px;" width="17" height="18" viewBox="0 0 17 18"><path d="M8.5 1L15.8 4.8V13L8.5 17L1.2 13V4.8ZM1.2 4.8L8.5 8.8L15.8 4.8M8.5 8.8V17" fill="none" stroke="#bcbcbc" stroke-width="1.15" stroke-linejoin="round"/></svg>
<span class="t" style="left:1001.00px;top:124.00px;line-height:17px;font-size:15.5px;letter-spacing:0.30px;">Player</span>
<svg style="left:979.8px;top:144.6px;" width="17" height="18" viewBox="0 0 17 18"><path d="M8.5 1L15.8 4.8V13L8.5 17L1.2 13V4.8ZM1.2 4.8L8.5 8.8L15.8 4.8M8.5 8.8V17" fill="none" stroke="#bcbcbc" stroke-width="1.15" stroke-linejoin="round"/></svg>
<span class="t" style="left:1001.00px;top:144.00px;line-height:17px;font-size:15.5px;letter-spacing:0.30px;">Platform</span>
<div style="left:904px;top:495px;width:534px;height:24px;background:#282828;border-radius:4px 4px 0 0;"></div>
<svg style="left:914px;top:501.5px;" width="16" height="13" viewBox="0 0 16 13"><path d="M0.4 12.4V0.6H6.2L8 3H15.4V12.4Z" fill="#c4c4c4"/></svg>
<span class="t" style="left:934.00px;top:499.00px;line-height:17px;font-size:15.5px;letter-spacing:0.43px;">Project</span>
<div style="left:1009px;top:495px;width:109px;height:24px;background:#3c3c3c;border-radius:3px 3px 0 0;"></div>
<svg style="left:1018.5px;top:501px;" width="13" height="14" viewBox="0 0 13 14"><rect x="0.6" y="0.6" width="11.6" height="12.6" rx="1" fill="none" stroke="#c4c4c4" stroke-width="1.3"/><path d="M1 4.2H12M1 7.2H12M1 10.2H12" stroke="#c4c4c4" stroke-width="1.6"/></svg>
<span class="t" style="left:1037.00px;top:499.00px;line-height:17px;font-size:15.5px;letter-spacing:0.35px;">Console</span>
<svg style="left:1420.2px;top:500.5px;" width="3" height="13" viewBox="0 0 3 13"><circle cx="1.5" cy="1.5" r="1.3" fill="#c4c4c4"/><circle cx="1.5" cy="6.1" r="1.3" fill="#c4c4c4"/><circle cx="1.5" cy="10.7" r="1.3" fill="#c4c4c4"/></svg>
<div style="left:904px;top:519px;width:535px;height:26px;background:#3c3c3c;border-bottom:1px solid #232323;"></div>
<div style="left:976px;top:519px;width:75px;height:25px;background:#505050;"></div>
<div style="left:1052px;top:519px;width:94px;height:25px;background:#505050;"></div>
<div style="left:1311px;top:519px;width:42px;height:25px;background:#505050;"></div>
<div style="left:1354px;top:519px;width:41px;height:25px;background:#505050;"></div>
<div style="left:1396px;top:519px;width:42px;height:25px;background:#505050;"></div>
<div style="left:975px;top:519px;width:1px;height:25px;background:#2c2c2c;"></div>
<div style="left:1051px;top:519px;width:1px;height:25px;background:#2c2c2c;"></div>
<div style="left:1146px;top:519px;width:1px;height:25px;background:#2c2c2c;"></div>
<div style="left:1211px;top:519px;width:1px;height:25px;background:#2c2c2c;"></div>
<div style="left:1310px;top:519px;width:1px;height:25px;background:#2c2c2c;"></div>
<div style="left:1353px;top:519px;width:1px;height:25px;background:#2c2c2c;"></div>
<div style="left:1395px;top:519px;width:1px;height:25px;background:#2c2c2c;"></div>
<div style="left:954px;top:524px;width:1px;height:15px;background:#2c2c2c;"></div>
<span class="t" style="left:909.00px;top:524.00px;line-height:17px;font-size:15.5px;letter-spacing:0.15px;">Clear</span>
<svg style="left:960.6px;top:528.6px;" width="9.6" height="5.6" viewBox="0 0 9.6 5.6"><path d="M0 0H9.6L4.8 5.6Z" fill="#c4c4c4"/></svg>
<span class="t" style="left:982.00px;top:524.00px;line-height:17px;font-size:15.5px;letter-spacing:0.25px;">Collapse</span>
<span class="t" style="left:1059.00px;top:524.00px;line-height:17px;font-size:15.5px;letter-spacing:-0.12px;">Error Pause</span>
<span class="t" style="left:1152.00px;top:524.00px;line-height:17px;font-size:15.5px;letter-spacing:0.03px;">Editor</span>
<svg style="left:1196.7px;top:528.6px;" width="9.6" height="5.6" viewBox="0 0 9.6 5.6"><path d="M0 0H9.6L4.8 5.6Z" fill="#c4c4c4"/></svg>
<div style="left:1214.5px;top:522px;width:93.5px;height:19.6px;background:#282828;border-radius:5px;border:1px solid #1c1c1c;"></div>
<svg style="left:1220px;top:527px;" width="11" height="11" viewBox="0 0 11 11"><circle cx="3.8" cy="3.8" r="2.6" fill="none" stroke="#c4c4c4" stroke-width="1.5"/><path d="M5.6 5.8L9 9.4" stroke="#c4c4c4" stroke-width="1.8"/></svg>
<svg style="left:1317px;top:523.5px;" width="17" height="17" viewBox="0 0 17 17"><circle cx="8" cy="7.6" r="7.4" fill="#8a8a8a"/><path d="M11 13L14.6 16.4L14 11Z" fill="#8a8a8a"/><rect x="7" y="3" width="2" height="6.4" fill="#505050"/><rect x="7" y="10.6" width="2" height="2" fill="#505050"/></svg>
<span class="t" style="left:1339.00px;top:524.00px;line-height:17px;font-size:15.5px;letter-spacing:-0.10px;">0</span>
<svg style="left:1359.5px;top:524px;" width="17" height="16" viewBox="0 0 17 16"><path d="M8.5 0.6L16.6 15.2H.4Z" fill="#8a8a8a"/><rect x="7.6" y="5.4" width="1.8" height="5.6" fill="#505050"/><rect x="7.6" y="12" width="1.8" height="1.8" fill="#505050"/></svg>
<span class="t" style="left:1382.00px;top:524.00px;line-height:17px;font-size:15.5px;letter-spacing:-0.10px;">0</span>
<svg style="left:1402px;top:523.6px;" width="16" height="16" viewBox="0 0 16 16"><path d="M4.8 0.3H11.2L15.7 4.8V11.2L11.2 15.7H4.8L.3 11.2V4.8Z" fill="#e4e4e4"/><rect x="7" y="3.2" width="2" height="6.6" fill="#505050"/><rect x="7" y="11" width="2" height="2" fill="#505050"/></svg>
<span class="t" style="left:1424.00px;top:524.00px;line-height:17px;font-size:15.5px;letter-spacing:-0.10px;">0</span>
<div style="left:904px;top:545px;width:535px;height:386px;background:#383838;"></div>
<div style="left:904px;top:816px;width:535px;height:1px;background:#262626;"></div>
<div style="left:1441px;top:33px;width:464px;height:24px;background:#282828;border-radius:4px 0 0 0;"></div>
<div style="left:1441px;top:33px;width:119px;height:24px;background:#3c3c3c;border-radius:4px 3px 0 0;"></div>
<svg style="left:1452.6px;top:40px;" width="13" height="13" viewBox="0 0 13 13"><circle cx="6.4" cy="6.3" r="6.2" fill="#c4c4c4"/><rect x="5.4" y="5.2" width="2.1" height="4.8" fill="#3c3c3c"/><rect x="5.4" y="2.4" width="2.1" height="1.9" fill="#3c3c3c"/><rect x="4.6" y="5.2" width="1.2" height="1" fill="#3c3c3c"/><rect x="4.6" y="9.2" width="3.8" height="1" fill="#3c3c3c"/></svg>
<span class="t" style="left:1471.00px;top:37.00px;line-height:17px;font-size:15.5px;letter-spacing:0.43px;">Inspector</span>
<svg style="left:1871.2px;top:38px;" width="11" height="13" viewBox="0 0 11 13"><path d="M2.9 4.9V3.8a2.6 2.6 0 0 1 5.2 0V6.6" fill="none" stroke="#c4c4c4" stroke-width="1.3"/><rect x="0.7" y="6.7" width="9.6" height="5.3" fill="none" stroke="#c4c4c4" stroke-width="1.3"/></svg>
<svg style="left:1895.9px;top:38px;" width="3" height="13" viewBox="0 0 3 13"><circle cx="1.5" cy="1.5" r="1.3" fill="#c4c4c4"/><circle cx="1.5" cy="6.1" r="1.3" fill="#c4c4c4"/><circle cx="1.5" cy="10.7" r="1.3" fill="#c4c4c4"/></svg>
<div style="left:1441px;top:57px;width:464px;height:874px;background:#383838;"></div>
<div style="left:1441px;top:57px;width:464px;height:74px;background:#3c3c3c;"></div>
<svg style="left:1449px;top:69px;" width="27" height="29" viewBox="0 0 27 29"><path d="M13 1.6L24.6 7.2V20.6L13 26.8L1.6 20.6V7.2ZM1.6 7.2L13 13.2L24.6 7.2M13 13.2V26.8" fill="none" stroke="#c4c4c4" stroke-width="1.4" stroke-linejoin="round"/></svg>
<svg style="left:1473.9px;top:95.89999999999999px;" width="9" height="5.4" viewBox="0 0 9 5.4"><path d="M0 0H9L4.5 5.4Z" fill="#c4c4c4"/></svg>
<div style="left:1500px;top:71px;width:17px;height:17.8px;background:#262626;border:1px solid #1d1d1d;border-radius:3px;"><svg style="left:2px;top:2.4px;" width="12" height="11" viewBox="0 0 12 11"><path d="M1.2 5.8L4.4 9L10.6 1.8" fill="none" stroke="#f0f0f0" stroke-width="1.9"/></svg></div>
<div style="left:1525px;top:68px;width:290px;height:23px;background:#2a2a2a;border:1px solid #1e1e1e;border-radius:3px;"></div>
<span class="t" style="left:1528.00px;top:72.00px;line-height:17px;font-size:15.5px;letter-spacing:-0.08px;color:#e4e4e4;font-weight:bold;">Player</span>
<div style="left:1818px;top:71px;width:17px;height:17.8px;background:#262626;border:1px solid #1d1d1d;border-radius:3px;"></div>
<span class="t" style="left:1841.00px;top:71.00px;line-height:17px;font-size:15.5px;letter-spacing:0.51px;">Static</span>
<svg style="left:1898.3px;top:77.7px;" width="9.4" height="5.6" viewBox="0 0 9.4 5.6"><path d="M0 0H9.4L4.7 5.6Z" fill="#c4c4c4"/></svg>
<span class="t" style="left:1492.00px;top:101.00px;line-height:17px;font-size:15.5px;letter-spacing:0.70px;">Tag</span>
<div style="left:1524.6px;top:98.6px;width:167px;height:21.8px;background:#515151;border-radius:3px;border:1px solid #303030;"></div>
<span class="t" style="left:1529.00px;top:101.00px;line-height:17px;font-size:15.5px;letter-spacing:0.49px;color:#e4e4e4;">Untagged</span>
<svg style="left:1674.8999999999999px;top:107.0px;" width="9.4" height="5.6" viewBox="0 0 9.4 5.6"><path d="M0 0H9.4L4.7 5.6Z" fill="#c4c4c4"/></svg>
<span class="t" style="left:1710.00px;top:101.00px;line-height:17px;font-size:15.5px;letter-spacing:0.61px;">Layer</span>
<div style="left:1755.6px;top:98.6px;width:160px;height:21.8px;background:#515151;border-radius:3px;border:1px solid #353535;"></div>
<span class="t" style="left:1760.00px;top:101.00px;line-height:17px;font-size:15.5px;letter-spacing:0.37px;color:#e4e4e4;">Default</span>
<svg style="left:1893.7px;top:107.0px;" width="9.4" height="5.6" viewBox="0 0 9.4 5.6"><path d="M0 0H9.4L4.7 5.6Z" fill="#c4c4c4"/></svg>
<div style="left:1441px;top:131px;width:464px;height:1px;background:#1a1a1a;"></div>
<div style="left:1441px;top:132px;width:464px;height:27px;background:#3e3e3e;"></div>
<svg style="left:1450.2px;top:140.3px;" width="9" height="10" viewBox="0 0 9 10"><path d="M0 0L9 5.0L0 10Z" fill="#7e7e7e"/></svg>
<span class="t" style="left:1517.00px;top:137.00px;line-height:17px;font-size:15.5px;letter-spacing:0.04px;color:#e4e4e4;font-weight:bold;">Transform</span>
<svg class="tx" style="left:1843.3px;top:138.4px;" width="13" height="13" viewBox="0 0 13 13"><circle cx="6.4" cy="6.4" r="6.2" fill="#c4c4c4"/><text x="6.4" y="10.2" font-size="10" font-weight="bold" text-anchor="middle" fill="#3e3e3e" font-family="Liberation Sans, sans-serif">?</text></svg>
<svg style="left:1868.6px;top:139.4px;" width="13" height="13" viewBox="0 0 13 13"><g fill="#c4c4c4"><rect x="0" y="2.4" width="6.4" height="1.3"/><rect x="8.2" y="0" width="1.8" height="5.2"/><rect x="8.2" y="2.4" width="4.6" height="1.3"/><rect x="0" y="8.6" width="1.6" height="1.3"/><rect x="4.2" y="6.2" width="1.8" height="6"/><rect x="4.2" y="8.6" width="8.6" height="1.3"/></g></svg>
<svg style="left:1898.6000000000001px;top:138.8px;" width="3" height="13" viewBox="0 0 3 13"><circle cx="1.5" cy="1.5" r="1.3" fill="#c4c4c4"/><circle cx="1.5" cy="6.1" r="1.3" fill="#c4c4c4"/><circle cx="1.5" cy="10.7" r="1.3" fill="#c4c4c4"/></svg>
<div style="left:1441px;top:159px;width:464px;height:1px;background:#1a1a1a;"></div>
<div style="left:1441px;top:160px;width:464px;height:28px;background:#3e3e3e;"></div>
<svg style="left:1450.2px;top:168.3px;" width="9" height="10" viewBox="0 0 9 10"><path d="M0 0L9 5.0L0 10Z" fill="#7e7e7e"/></svg>
<div style="left:1491px;top:164.2px;width:17px;height:17.8px;background:#262626;border:1px solid #1d1d1d;border-radius:3px;"><svg style="left:2px;top:2.4px;" width="12" height="11" viewBox="0 0 12 11"><path d="M1.2 5.8L4.4 9L10.6 1.8" fill="none" stroke="#f0f0f0" stroke-width="1.9"/></svg></div>
<span class="t" style="left:1517.00px;top:165.00px;line-height:17px;font-size:15.5px;letter-spacing:-0.04px;color:#e4e4e4;font-weight:bold;">Sprite Renderer</span>
<svg class="tx" style="left:1843.3px;top:166.4px;" width="13" height="13" viewBox="0 0 13 13"><circle cx="6.4" cy="6.4" r="6.2" fill="#c4c4c4"/><text x="6.4" y="10.2" font-size="10" font-weight="bold" text-anchor="middle" fill="#3e3e3e" font-family="Liberation Sans, sans-serif">?</text></svg>
<svg style="left:1868.6px;top:167.4px;" width="13" height="13" viewBox="0 0 13 13"><g fill="#c4c4c4"><rect x="0" y="2.4" width="6.4" height="1.3"/><rect x="8.2" y="0" width="1.8" height="5.2"/><rect x="8.2" y="2.4" width="4.6" height="1.3"/><rect x="0" y="8.6" width="1.6" height="1.3"/><rect x="4.2" y="6.2" width="1.8" height="6"/><rect x="4.2" y="8.6" width="8.6" height="1.3"/></g></svg>
<svg style="left:1898.6000000000001px;top:166.8px;" width="3" height="13" viewBox="0 0 3 13"><circle cx="1.5" cy="1.5" r="1.3" fill="#c4c4c4"/><circle cx="1.5" cy="6.1" r="1.3" fill="#c4c4c4"/><circle cx="1.5" cy="10.7" r="1.3" fill="#c4c4c4"/></svg>
<div style="left:1441px;top:188px;width:464px;height:1px;background:#1a1a1a;"></div>
<div style="left:1441px;top:189px;width:464px;height:27px;background:#3e3e3e;"></div>
<svg style="left:1450.2px;top:197.3px;" width="9" height="10" viewBox="0 0 9 10"><path d="M0 0L9 5.0L0 10Z" fill="#7e7e7e"/></svg>
<span class="t" style="left:1516.00px;top:194.00px;line-height:17px;font-size:15.5px;letter-spacing:-0.10px;color:#e4e4e4;font-weight:bold;">Rigidbody 2D</span>
<svg class="tx" style="left:1843.3px;top:195.4px;" width="13" height="13" viewBox="0 0 13 13"><circle cx="6.4" cy="6.4" r="6.2" fill="#c4c4c4"/><text x="6.4" y="10.2" font-size="10" font-weight="bold" text-anchor="middle" fill="#3e3e3e" font-family="Liberation Sans, sans-serif">?</text></svg>
<svg style="left:1868.6px;top:196.4px;" width="13" height="13" viewBox="0 0 13 13"><g fill="#c4c4c4"><rect x="0" y="2.4" width="6.4" height="1.3"/><rect x="8.2" y="0" width="1.8" height="5.2"/><rect x="8.2" y="2.4" width="4.6" height="1.3"/><rect x="0" y="8.6" width="1.6" height="1.3"/><rect x="4.2" y="6.2" width="1.8" height="6"/><rect x="4.2" y="8.6" width="8.6" height="1.3"/></g></svg>
<svg style="left:1898.6000000000001px;top:195.8px;" width="3" height="13" viewBox="0 0 3 13"><circle cx="1.5" cy="1.5" r="1.3" fill="#c4c4c4"/><circle cx="1.5" cy="6.1" r="1.3" fill="#c4c4c4"/><circle cx="1.5" cy="10.7" r="1.3" fill="#c4c4c4"/></svg>
<div style="left:1441px;top:216px;width:464px;height:1px;background:#1a1a1a;"></div>
<div style="left:1441px;top:217px;width:464px;height:27px;background:#3e3e3e;"></div>
<svg style="left:1450.2px;top:225.3px;" width="9" height="10" viewBox="0 0 9 10"><path d="M0 0L9 5.0L0 10Z" fill="#7e7e7e"/></svg>
<div style="left:1491px;top:221.2px;width:17px;height:17.8px;background:#262626;border:1px solid #1d1d1d;border-radius:3px;"><svg style="left:2px;top:2.4px;" width="12" height="11" viewBox="0 0 12 11"><path d="M1.2 5.8L4.4 9L10.6 1.8" fill="none" stroke="#f0f0f0" stroke-width="1.9"/></svg></div>
<span class="t" style="left:1517.00px;top:222.00px;line-height:17px;font-size:15.5px;letter-spacing:-0.16px;color:#e4e4e4;font-weight:bold;">Circle Collider 2D</span>
<svg class="tx" style="left:1843.3px;top:223.4px;" width="13" height="13" viewBox="0 0 13 13"><circle cx="6.4" cy="6.4" r="6.2" fill="#c4c4c4"/><text x="6.4" y="10.2" font-size="10" font-weight="bold" text-anchor="middle" fill="#3e3e3e" font-family="Liberation Sans, sans-serif">?</text></svg>
<svg style="left:1868.6px;top:224.4px;" width="13" height="13" viewBox="0 0 13 13"><g fill="#c4c4c4"><rect x="0" y="2.4" width="6.4" height="1.3"/><rect x="8.2" y="0" width="1.8" height="5.2"/><rect x="8.2" y="2.4" width="4.6" height="1.3"/><rect x="0" y="8.6" width="1.6" height="1.3"/><rect x="4.2" y="6.2" width="1.8" height="6"/><rect x="4.2" y="8.6" width="8.6" height="1.3"/></g></svg>
<svg style="left:1898.6000000000001px;top:223.8px;" width="3" height="13" viewBox="0 0 3 13"><circle cx="1.5" cy="1.5" r="1.3" fill="#c4c4c4"/><circle cx="1.5" cy="6.1" r="1.3" fill="#c4c4c4"/><circle cx="1.5" cy="10.7" r="1.3" fill="#c4c4c4"/></svg>
<div style="left:1441px;top:244px;width:464px;height:1px;background:#1a1a1a;"></div>
<div style="left:1441px;top:245px;width:464px;height:27px;background:#3e3e3e;"></div>
<svg style="left:1449.4px;top:253.9px;" width="11" height="9" viewBox="0 0 11 9"><path d="M0 0H11L5.5 9Z" fill="#7e7e7e"/></svg>
<div style="left:1491px;top:249.2px;width:17px;height:17.8px;background:#262626;border:1px solid #1d1d1d;border-radius:3px;"><svg style="left:2px;top:2.4px;" width="12" height="11" viewBox="0 0 12 11"><path d="M1.2 5.8L4.4 9L10.6 1.8" fill="none" stroke="#f0f0f0" stroke-width="1.9"/></svg></div>
<span class="t" style="left:1516.00px;top:250.00px;line-height:17px;font-size:15.5px;letter-spacing:0.10px;color:#e4e4e4;font-weight:bold;">Player (Script)</span>
<svg class="tx" style="left:1843.3px;top:251.4px;" width="13" height="13" viewBox="0 0 13 13"><circle cx="6.4" cy="6.4" r="6.2" fill="#c4c4c4"/><text x="6.4" y="10.2" font-size="10" font-weight="bold" text-anchor="middle" fill="#3e3e3e" font-family="Liberation Sans, sans-serif">?</text></svg>
<svg style="left:1868.6px;top:252.4px;" width="13" height="13" viewBox="0 0 13 13"><g fill="#c4c4c4"><rect x="0" y="2.4" width="6.4" height="1.3"/><rect x="8.2" y="0" width="1.8" height="5.2"/><rect x="8.2" y="2.4" width="4.6" height="1.3"/><rect x="0" y="8.6" width="1.6" height="1.3"/><rect x="4.2" y="6.2" width="1.8" height="6"/><rect x="4.2" y="8.6" width="8.6" height="1.3"/></g></svg>
<svg style="left:1898.6000000000001px;top:251.8px;" width="3" height="13" viewBox="0 0 3 13"><circle cx="1.5" cy="1.5" r="1.3" fill="#c4c4c4"/><circle cx="1.5" cy="6.1" r="1.3" fill="#c4c4c4"/><circle cx="1.5" cy="10.7" r="1.3" fill="#c4c4c4"/></svg>
<svg style="left:1467px;top:136px;" width="18" height="18" viewBox="0 0 18 18"><path d="M9.2 2.2V8.2" stroke="#8eea3c" stroke-width="2.4"/><path d="M11.9 11.3L15.2 13.5" stroke="#e2661c" stroke-width="3" stroke-linecap="round"/><path d="M6.6 11.7L3.1 13.9" stroke="#c9d6f5" stroke-width="3" stroke-linecap="round"/></svg>
<svg style="left:1467px;top:164.6px;" width="18" height="18" viewBox="0 0 18 18"><rect x="2" y="2" width="13.6" height="13.6" fill="none" stroke="#8a8a8a" stroke-width="1.1"/><g fill="#a8a8a8"><circle cx="2" cy="2" r="1.7"/><circle cx="15.6" cy="2" r="1.7"/><circle cx="2" cy="15.6" r="1.7"/><circle cx="15.6" cy="15.6" r="1.7"/></g><circle cx="9" cy="7.4" r="3.3" fill="#b9b9b9"/><path d="M4.4 13.4C5.6 10.2 8 9.2 10.2 9.2V13.4Z" fill="#b9b9b9"/><ellipse cx="11.6" cy="13" rx="5.6" ry="3.6" fill="#e6e6e6"/><circle cx="11.6" cy="13" r="1.9" fill="#3e3e3e"/></svg>
<svg style="left:1467px;top:193px;" width="18" height="18" viewBox="0 0 18 18"><circle cx="9" cy="9" r="8.2" fill="#262626" stroke="#7ccf3a" stroke-width="1.3"/><path d="M9 9V.8A8.2 8.2 0 0 0 .8 9ZM9 9V17.2A8.2 8.2 0 0 0 17.2 9Z" fill="#a6f06a"/></svg>
<svg style="left:1467.4px;top:221.4px;" width="17" height="17" viewBox="0 0 17 17"><circle cx="8.4" cy="8.4" r="6" fill="none" stroke="#a2ec68" stroke-width="4.2"/></svg>
<svg class="tx" style="left:1468.6px;top:249px;" width="15" height="18" viewBox="0 0 15 18"><path d="M.6 .6H10L14.4 5V17.4H.6Z" fill="#ececec"/><text x="7.3" y="14.6" font-size="13" text-anchor="middle" fill="#46583a" stroke="#46583a" stroke-width="0.3" font-family="Liberation Sans, sans-serif">#</text></svg>
<div style="left:1441px;top:272px;width:464px;height:109px;background:#383838;border-top:1px solid #303030;"></div>
<span class="t" style="left:1465.00px;top:279.00px;line-height:17px;font-size:15.5px;letter-spacing:0.16px;color:#8a8a8a;">Script</span>
<div style="left:1631px;top:276.09999999999997px;width:290px;height:22.8px;background:#2a2a2a;border:1px solid #202020;border-radius:3px;"></div>
<span class="t" style="left:1465.00px;top:305.00px;line-height:17px;font-size:15.5px;letter-spacing:-0.45px;">Rb</span>
<div style="left:1631px;top:300.79999999999995px;width:290px;height:22.8px;background:#2a2a2a;border:1px solid #202020;border-radius:3px;"></div>
<span class="t" style="left:1465.00px;top:330.00px;line-height:17px;font-size:15.5px;letter-spacing:0.20px;">Move Speed</span>
<div style="left:1631px;top:325.49999999999994px;width:290px;height:22.8px;background:#2a2a2a;border:1px solid #202020;border-radius:3px;"></div>
<span class="t" style="left:1466.00px;top:354.00px;line-height:17px;font-size:15.5px;letter-spacing:0.08px;">Jump Force</span>
<div style="left:1631px;top:350.2px;width:290px;height:22.8px;background:#2a2a2a;border:1px solid #202020;border-radius:3px;"></div>
<svg class="tx" style="left:1636.6px;top:280.4px;" width="11.6" height="14" viewBox="0 0 15 18"><path d="M.6 .6H10L14.4 5V17.4H.6Z" fill="#9a9a9a"/><text x="7.3" y="14.6" font-size="13" text-anchor="middle" fill="#5c5c5c" stroke="#5c5c5c" stroke-width="0.3" font-family="Liberation Sans, sans-serif">#</text></svg>
<span class="t" style="left:1654.00px;top:279.00px;line-height:17px;font-size:15.5px;letter-spacing:-0.12px;color:#8a8a8a;">Player</span>
<div style="left:1886.6px;top:277.4px;width:20px;height:20px;background:#2f2f2f;"></div>
<svg style="left:1635.6px;top:305.2px;" width="14" height="14" viewBox="0 0 18 18"><circle cx="9" cy="9" r="8.2" fill="#262626" stroke="#7ccf3a" stroke-width="1.3"/><path d="M9 9V.8A8.2 8.2 0 0 0 .8 9ZM9 9V17.2A8.2 8.2 0 0 0 17.2 9Z" fill="#a6f06a"/></svg>
<span class="t" style="left:1653.00px;top:304.00px;line-height:17px;font-size:15.5px;letter-spacing:0.11px;color:#dedede;">Player (Rigidbody 2D)</span>
<div style="left:1886.6px;top:302.1px;width:20px;height:20px;background:#383838;"></div>
<svg style="left:1891.7px;top:281.3px;" width="13" height="13" viewBox="0 0 13 13"><circle cx="6.5" cy="6.5" r="5.6" fill="none" stroke="#808080" stroke-width="1.1"/><circle cx="6.5" cy="6.5" r="1.9" fill="#808080"/></svg>
<svg style="left:1891.7px;top:306.1px;" width="13" height="13" viewBox="0 0 13 13"><circle cx="6.5" cy="6.5" r="5.6" fill="none" stroke="#c4c4c4" stroke-width="1.1"/><circle cx="6.5" cy="6.5" r="1.9" fill="#c4c4c4"/></svg>
<span class="t" style="left:1636.00px;top:329.00px;line-height:17px;font-size:15.5px;letter-spacing:-0.10px;color:#dedede;">5</span>
<span class="t" style="left:1636.00px;top:353.00px;line-height:17px;font-size:15.5px;letter-spacing:-0.45px;color:#dedede;">11</span>
<div style="left:1441px;top:381px;width:464px;height:1px;background:#1a1a1a;"></div>
<div style="left:1441px;top:382px;width:464px;height:68px;background:#3e3e3e;"></div>
<div style="left:1441px;top:450px;width:464px;height:1px;background:#1a1a1a;"></div>
<div style="left:1441px;top:465px;width:464px;height:1px;background:#1a1a1a;"></div>
<div style="left:1461px;top:389.6px;width:40px;height:40.4px;background:#404040;"></div>
<div style="left:1465.8px;top:395px;width:30.4px;height:30.2px;background:#fff;"></div>
<span class="t" style="left:1510.00px;top:389.00px;line-height:19px;font-size:17px;letter-spacing:0.37px;color:#bdbdbd;">Sprites-Default (Material)</span>
<svg class="tx" style="left:1879.6px;top:392.20000000000005px;" width="13" height="13" viewBox="0 0 13 13"><circle cx="6.4" cy="6.4" r="6.2" fill="#c4c4c4"/><text x="6.4" y="10.2" font-size="10" font-weight="bold" text-anchor="middle" fill="#3e3e3e" font-family="Liberation Sans, sans-serif">?</text></svg>
<svg style="left:1902.8px;top:392px;" width="3" height="13" viewBox="0 0 3 13"><circle cx="1.5" cy="1.5" r="1.3" fill="#c4c4c4"/><circle cx="1.5" cy="6.1" r="1.3" fill="#c4c4c4"/><circle cx="1.5" cy="10.7" r="1.3" fill="#c4c4c4"/></svg>
<svg style="left:1450.2px;top:431px;" width="9" height="10" viewBox="0 0 9 10"><path d="M0 0L9 5.0L0 10Z" fill="#7e7e7e"/></svg>
<span class="t" style="left:1507.00px;top:420.00px;line-height:17px;font-size:15.5px;letter-spacing:0.20px;color:#8a8a8a;">Shader</span>
<div style="left:1571.6px;top:418px;width:218.6px;height:21.4px;background:#484848;border-radius:3px;border:1px solid #363636;"></div>
<span class="t" style="left:1576.00px;top:420.00px;line-height:17px;font-size:15.5px;letter-spacing:0.38px;color:#969696;">Sprites/Default</span>
<svg style="left:1773.8999999999999px;top:425.8px;" width="9.4" height="5.6" viewBox="0 0 9.4 5.6"><path d="M0 0H9.4L4.7 5.6Z" fill="#8a8a8a"/></svg>
<div style="left:1795.8px;top:417.5px;width:55.4px;height:22px;background:#585858;border-radius:3px;border:1px solid #2e2e2e;"></div>
<span class="t" style="left:1802.00px;top:420.00px;line-height:17px;font-size:15.5px;letter-spacing:-0.06px;color:#e8e8e8;">Edit...</span>
<div style="left:1856.8px;top:418px;width:60px;height:21.4px;background:#4e4e4e;border-radius:3px;border:1px solid #2e2e2e;"></div>
<svg style="left:1867.6px;top:423px;" width="14" height="11" viewBox="0 0 14 11"><g fill="#c4c4c4"><rect x="4.2" y="0.8" width="9.4" height="1.3"/><rect x="4.2" y="4.7" width="9.4" height="1.3"/><rect x="4.2" y="8.6" width="9.4" height="1.3"/><rect x="1.9" y="4.4" width="1.8" height="1.8"/><rect x="1.9" y="8.3" width="1.8" height="1.8"/><path d="M0.2 1.5L2.4 -0.2V3.2Z"/><rect x="2.2" y="0.9" width="1.6" height="1.2"/></g></svg>
<svg style="left:1893.1px;top:426.0px;" width="9.4" height="5.6" viewBox="0 0 9.4 5.6"><path d="M0 0H9.4L4.7 5.6Z" fill="#c4c4c4"/></svg>
<div style="left:1536px;top:476.8px;width:285.4px;height:28.8px;background:#585858;border-radius:3px;border:1px solid #2c2c2c;"></div>
<span class="t" style="left:1621.00px;top:483.00px;line-height:17px;font-size:15.5px;letter-spacing:0.12px;color:#e8e8e8;">Add Component</span>
<div style="left:0;top:931px;width:1905px;height:1px;background:#e6e6e6"></div>
</body></html>
